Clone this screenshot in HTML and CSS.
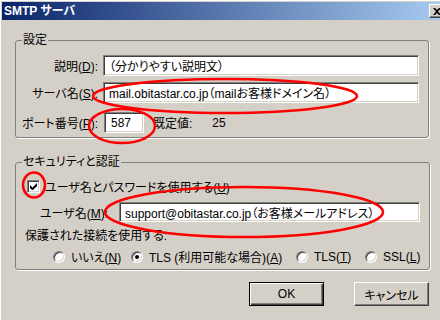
FILE: index.html
```html
<!DOCTYPE html>
<html lang="ja">
<head>
  <meta charset="UTF-8" />
  <title>SMTP サーバ</title>
  <link rel="stylesheet" href="styles.css">
</head>
<body>
<div class="dialog">
  <div class="titlebar">
    <span class="title">SMTP サーバ</span>
    <span class="close">
      <svg width="8" height="7" viewBox="0 0 8 7"><path d="M0 0h2l2 2 2-2h2L5 3.5 8 7H6L4 5 2 7H0l3-3.5z" fill="#000"/></svg>
    </span>
  </div>

  <fieldset class="group">
    <legend>設定</legend>
    <div class="grid">
      <label>説明(<u>D</u>):</label>
      <input class="field" type="text" value="（分かりやすい説明文）">
      <label>サーバ名(<u>S</u>):</label>
      <input class="field" type="text" value="mail.obitastar.co.jp（mailお客様ドメイン名）">
      <label class="port-label">ポート番号(<u>P</u>):</label>
      <div class="port-row">
        <input class="field port" type="text" value="587">
        <span class="default">既定値:</span>
        <span>25</span>
      </div>
    </div>
  </fieldset>

  <fieldset class="group security">
    <legend>セキュリティと認証</legend>
    <div class="check-row">
      <span class="checkbox">
        <svg width="7" height="7" viewBox="0 0 7 7"><path d="M0 2v3l2 2h1l4-4V0L2.5 4.5z" fill="#000"/></svg>
      </span>
      <span>ユーザ名とパスワードを使用する(<u>U</u>)</span>
    </div>
    <div class="user-row">
      <label>ユーザ名(<u>M</u>):</label>
      <input class="field" type="text" value="support@obitastar.co.jp（お客様メールアドレス）">
    </div>
    <div class="conn-label">保護された接続を使用する:</div>
    <div class="radios">
      <span class="opt"><span class="radio"></span><span>いいえ(<u>N</u>)</span></span>
      <span class="opt"><span class="radio on"></span><span>TLS (利用可能な場合)(<u>A</u>)</span></span>
      <span class="opt"><span class="radio"></span><span>TLS(<u>T</u>)</span></span>
      <span class="opt"><span class="radio"></span><span>SSL(<u>L</u>)</span></span>
    </div>
  </fieldset>

  <div class="buttons">
    <button class="btn default">OK</button>
    <button class="btn">キャンセル</button>
  </div>

  <!-- 赤丸の書き込み -->
  <svg class="marks" width="440" height="320" viewBox="0 0 440 320">
    <g fill="none" stroke="#ff0000" stroke-width="2.5">
      <ellipse cx="225" cy="96" rx="132" ry="17"/>
      <ellipse cx="122" cy="126" rx="33" ry="17"/>
      <ellipse cx="34" cy="185" rx="11" ry="12.5"/>
      <ellipse cx="244" cy="212" rx="139" ry="25"/>
    </g>
  </svg>
</div>
</body>
</html>
```

FILE: styles.css
```css
body { margin: 0; font-family: "Liberation Sans", "Noto Sans CJK JP", sans-serif; font-size: 12px; }
.dialog {
  position: relative;
  width: 440px;
  height: 320px;
  overflow: hidden;
  background: #d4d0c8;
  padding-top: 2px;
  box-sizing: border-box;
  box-shadow: inset 1px 1px 0 #fff;
  font-feature-settings: "palt";
  color: #000;
}
.titlebar {
  height: 18px;
  margin-left: 2px;
  display: flex;
  align-items: center;
  justify-content: space-between;
  background: linear-gradient(to right, #0a246a, #a6caf0);
}
.title { color: #fff; font-weight: bold; padding-left: 2px; line-height: 18px; }
.close {
  width: 16px;
  height: 14px;
  margin-right: -5px;
  box-sizing: border-box;
  background: #d4d0c8;
  border: 1px solid;
  border-color: #fff #404040 #404040 #fff;
  box-shadow: inset -1px -1px 0 #808080;
  display: flex;
  align-items: center;
  justify-content: center;
}
.close svg { display: block; margin-left: -1px; }

.group {
  margin: 13px 11px 0 15px;
  padding: 8px 9px 4px 6px;
  border: 1px solid #808080;
  border-radius: 3px;
  box-shadow: 1px 1px 0 #fff;
}
.group legend { padding: 0 1px; line-height: 14px; }
.grid {
  display: grid;
  grid-template-columns: 76px 1fr;
  column-gap: 5px;
  row-gap: 6px;
  align-items: center;
}
.grid label { text-align: right; white-space: nowrap; }
.port-label { margin-top: 3px; }
.port-row { display: flex; align-items: center; margin-top: 3px; margin-left: 1px; }
.default { margin-left: 9px; margin-right: 20px; }

.field {
  height: 21px;
  box-sizing: border-box;
  margin: 0;
  padding: 0 0 0 5px;
  font: inherit;
  background: #fff;
  border: 1px solid;
  border-color: #808080 #fff #fff #808080;
  box-shadow: inset 1px 1px 0 #404040, inset -1px -1px 0 #d4d0c8;
  outline: none;
  width: 100%;
}
.port { width: 40px; padding-left: 6px; }

.security { margin-top: 17px; padding: 10px 9px 7px 6px; }
.check-row { display: flex; align-items: center; height: 15px; gap: 5px; margin-left: 5px; }
.checkbox {
  width: 13px;
  height: 13px;
  box-sizing: border-box;
  background: #fff;
  border: 1px solid;
  border-color: #808080 #fff #fff #808080;
  box-shadow: inset 1px 1px 0 #404040, inset -1px -1px 0 #d4d0c8;
  display: flex;
  align-items: center;
  justify-content: center;
}
.user-row { display: flex; align-items: center; margin-top: 8px; }
.user-row label { width: 86px; text-align: right; margin-right: 11px; flex: none; white-space: nowrap; }
.user-row .field { height: 20px; }
.conn-label { margin: 7px 0 0 3px; line-height: 14px; }
.radios {
  display: grid;
  grid-template-columns: 78px 165px 69px 1fr;
  padding-left: 31px;
  margin-top: 5px;
  height: 14px;
  align-items: center;
  white-space: nowrap;
}
.opt { display: flex; align-items: center; gap: 6px; }
.radio {
  width: 12px;
  height: 12px;
  box-sizing: border-box;
  border-radius: 50%;
  background: #fff;
  border: 1px solid;
  border-color: #808080 #fff #fff #808080;
  box-shadow: inset 1px 1px 0 #404040, inset -1px -1px 0 #d4d0c8;
  position: relative;
  flex: none;
}
.radio.on::after {
  content: "";
  position: absolute;
  left: 3px;
  top: 3px;
  width: 4px;
  height: 4px;
  border-radius: 50%;
  background: #000;
}

.buttons { display: flex; justify-content: flex-end; gap: 10px; margin: 12px 11px 0 0; }
.btn {
  width: 75px;
  height: 24px;
  box-sizing: border-box;
  font: inherit;
  color: #000;
  background: #d4d0c8;
  border: 1px solid;
  border-color: #fff #404040 #404040 #fff;
  box-shadow: inset -1px -1px 0 #808080;
  padding: 0;
}
.btn.default {
  border: 1px solid #000;
  box-shadow: inset 1px 1px 0 #fff, inset -1px -1px 0 #404040, inset -2px -2px 0 #808080;
}

.marks { position: absolute; left: 0; top: 0; pointer-events: none; }
```
